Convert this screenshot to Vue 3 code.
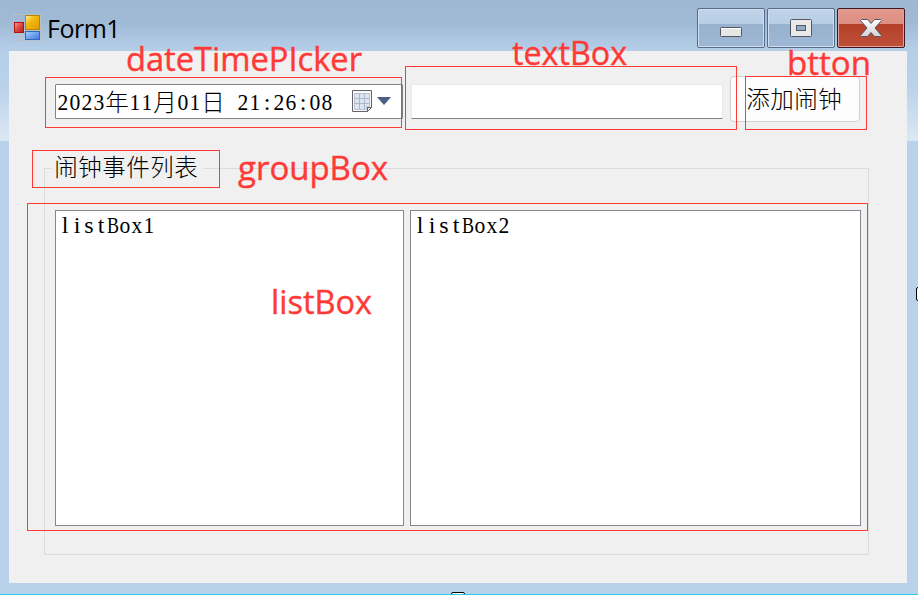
<script setup>
const split = (text) =>
  [...text].map((ch) => ({
    ch,
    kind: ch.charCodeAt(0) > 0x2e80 ? 'wide' : ch === 'B' ? 'squeeze' : /[list:]/.test(ch) ? 'slim' : 'plain'
  }))

const dateText = split('2023年11月01日 21:26:08')
const buttonText = split('添加闹钟')
const groupText = split('闹钟事件列表')
const lists = [
  { name: 'first', text: split('listBox1') },
  { name: 'second', text: split('listBox2') }
]

const frames = [
  { x: 45.5, y: 77.5, w: 356, h: 50 },
  { x: 405.5, y: 66.5, w: 331, h: 63 },
  { x: 745.5, y: 76.5, w: 121, h: 53 },
  { x: 32.5, y: 150.5, w: 187, h: 37 },
  { x: 27.5, y: 203.5, w: 840, h: 327 }
]
const labels = [
  { t: 'dateTimePIcker', x: 126, y: 71, w: 236 },
  { t: 'textBox', x: 512, y: 65, w: 115 },
  { t: 'btton', x: 787, y: 75, w: 84 },
  { t: 'groupBox', x: 238, y: 180, w: 150 },
  { t: 'listBox', x: 271, y: 314, w: 101 }
]
</script>

<template>
  <div class="window">
    <header class="titlebar">
      <svg class="logo" width="28" height="28" viewBox="0 0 28 28">
        <defs>
          <linearGradient id="gold" x1="0" y1="0" x2="1" y2="1">
            <stop offset="0" stop-color="#fff3a0" /><stop offset=".4" stop-color="#f2b810" /><stop offset="1" stop-color="#e09a00" />
          </linearGradient>
          <linearGradient id="ruby" x1="0" y1="0" x2="1" y2="1">
            <stop offset="0" stop-color="#f7a09a" /><stop offset=".5" stop-color="#d94840" /><stop offset="1" stop-color="#b51f1c" />
          </linearGradient>
          <linearGradient id="azure" x1="0" y1="0" x2="1" y2="1">
            <stop offset="0" stop-color="#a8ccff" /><stop offset="1" stop-color="#3c78e0" />
          </linearGradient>
        </defs>
        <path d="M.5 7V.5h11M.5 20v7.500M.5 26.500h11M5.500 20v7" fill="none" stroke="#bdbdbd" />
        <rect x="12.500" y="1.500" width="14" height="14" fill="url(#gold)" stroke="#b78408" />
        <rect x="1.500" y="8.500" width="9" height="10" fill="url(#ruby)" stroke="#b5100c" />
        <rect x="12.500" y="17.500" width="14" height="8" fill="url(#azure)" stroke="#3566b4" />
        <path d="M12 16.500h15.500V26.500H12M12 .5h15.500v16" fill="none" stroke="#b9c0c8" />
      </svg>
      <span class="title">Form1</span>
      <div class="controls">
        <span class="control">
          <svg width="68" height="40"><rect x="23.500" y="19.500" width="21" height="9" rx="1" fill="#e6e6e6" stroke="#535666" /><path d="M24 20.500h20" stroke="#fff" /></svg>
        </span>
        <span class="control">
          <svg width="68" height="40"><rect x="23.500" y="11.500" width="21" height="17" rx="1" fill="#e9e9e9" stroke="#535666" /><rect x="29.500" y="17.500" width="9" height="5" fill="#91abc7" stroke="#535666" /></svg>
        </span>
        <span class="control close">
          <svg width="68" height="40">
            <defs><linearGradient id="cross" x1="0" y1="0" x2="0" y2="1"><stop offset="0" stop-color="#fff" /><stop offset="1" stop-color="#d3d3d3" /></linearGradient></defs>
            <path d="M24.500 11.500h6l3.500 4 3.500-4h6l1 1-6.500 7.500 6.500 7.500-1 1h-6l-3.500-4-3.500 4h-6l-1-1 6.500-7.500-6.500-7.500z" fill="url(#cross)" stroke="#535666" stroke-linejoin="round" />
          </svg>
        </span>
      </div>
    </header>

    <main class="client">
      <div class="toolbar">
        <div class="picker">
          <span class="cells"><span v-for="(c, i) in dateText" :key="i" :class="c.kind">{{ c.ch }}</span></span>
          <svg class="calendar" width="40" height="24">
            <path d="M.5.500h19v17h-4v4H.5z" fill="#f7f8fa" stroke="#6b6063" />
            <path d="M2.500 3.500h15v13h-3v3h-12z" fill="#dfe5ef" stroke="#b8c3d5" />
            <path d="M7.500 4v15M12.500 4v15M3 8.500h14M3 13.500h14" stroke="#aab7ce" />
            <path d="M15.500 21.500v-4h4z" fill="#fff" stroke="#6b6063" />
            <path d="M25 7h14l-7 8z" fill="#4b6087" />
          </svg>
        </div>
        <div class="textbox"></div>
        <button class="add"><span class="cells"><span v-for="(c, i) in buttonText" :key="i" :class="c.kind">{{ c.ch }}</span></span></button>
      </div>

      <section class="group">
        <h2 class="cells legend"><span v-for="(c, i) in groupText" :key="i" :class="c.kind">{{ c.ch }}</span></h2>
        <div class="lists">
          <div v-for="l in lists" :key="l.name" class="list">
            <span class="cells"><span v-for="(c, i) in l.text" :key="i" :class="c.kind">{{ c.ch }}</span></span>
          </div>
        </div>
      </section>
    </main>

    <svg class="notes" width="918" height="595">
      <rect v-for="(f, i) in frames" :key="i" :x="f.x" :y="f.y" :width="f.w" :height="f.h" />
      <text v-for="l in labels" :key="l.t" :x="l.x" :y="l.y" :textLength="l.w" lengthAdjust="spacingAndGlyphs">{{ l.t }}</text>
    </svg>
    <i class="grip bottom"></i>
    <i class="grip right"></i>
  </div>
</template>

<style>
body { margin: 0; overflow: hidden; }
</style>

<style scoped>
* { box-sizing: border-box; }
.window {
  position: relative;
  width: 918px;
  height: 595px;
  padding: 0 11px 11px 9px;
  overflow: hidden;
  border-bottom: 1px solid #25cfe5;
  background: linear-gradient(#9eb8d4 0, #a0bad6 22px, #b6cfe9 51px, #b9d1ea 85px, #dce8f4 141px, #b9d1ea 141px);
}
.titlebar { display: flex; height: 51px; padding: 8px 2px 0 4px; }
.logo { margin-top: 6px; flex: none; }
.title { margin-left: 6px; font: 25px/40px "Open Sans", sans-serif; letter-spacing: -0.5px; color: #000; }
.controls { display: flex; gap: 2px; margin-left: auto; }
.control {
  width: 68px;
  height: 40px;
  border: 1px solid #596b87;
  border-radius: 2px;
  box-shadow: inset 0 0 0 1px #cddff1;
  background: linear-gradient(#bfd4e9 0, #b8cee5 15px, #98b1cd 15px, #9eb7d4 100%);
}
.control svg { display: block; margin: -1px; }
.close {
  border-color: #431422;
  box-shadow: inset 0 0 0 1px #dda298;
  background: linear-gradient(#e3998d 0, #dc8e82 15px, #b4402a 15px, #be5038 100%);
}
.client { width: 898px; height: 532px; padding: 25px 38px 28px 35px; background: #f0f0f0; }
.toolbar { display: flex; align-items: flex-start; height: 92px; padding-left: 11px; }
.picker {
  display: flex;
  width: 348px;
  height: 35px;
  margin: 8px 8px 0 0;
  padding: 5px 0 0 1px;
  border: 1px solid #838383;
  border-radius: 1px;
  background: #fff;
}
.calendar { margin: 0 0 0 19px; flex: none; }
.textbox { width: 312px; height: 35px; margin: 8px 7px 0 0; border: 1px solid #e9e9e9; border-bottom-color: #838383; background: #fff; }
.add { display: flex; width: 130px; height: 46px; margin: 0; padding: 10px 0 0 15px; border: 1px solid #d0d0d0; border-radius: 4px; background: #fdfdfd; }
.cells {
  display: flex;
  height: 24px;
  font: 300 24px/24px "Liberation Serif", "Noto Sans CJK SC", serif;
  color: #000;
  white-space: pre;
}
.cells span { display: flex; justify-content: center; width: 12px; }
.cells .wide { width: 24px; font-family: "Noto Sans CJK SC", sans-serif; font-size: 23.5px; line-height: 22px; }
.cells .plain { transform: scaleX(0.9); }
.cells .squeeze { transform: scaleX(0.75); }
.group { width: 825px; height: 387px; border: 1px solid #dcdcdc; }
.legend { width: 151px; height: 24px; margin: -14px 0 0 7px; padding: 0 4px 0 2px; background: #f0f0f0; }
.lists { display: grid; grid-template-columns: 349px 451px; gap: 6px; margin: 31px 0 0 10px; }
.list { height: 316px; padding: 2px 4px; border: 1px solid #828790; background: #fff; }
.list .cells { margin-left: -1px; }
.notes { position: absolute; inset: 0; }
.notes rect { fill: none; stroke: #ff3936; stroke-width: 1; }
.notes text { font: 33px "Open Sans", sans-serif; fill: #ff3936; stroke: #ff3936; stroke-width: 0.4; }
.grip { position: absolute; background: #fff; border: 1px solid #000; border-radius: 2px; }
.bottom { left: 451px; top: 592px; width: 14px; height: 8px; }
.right { left: 916px; top: 287px; width: 8px; height: 14px; }
</style>
